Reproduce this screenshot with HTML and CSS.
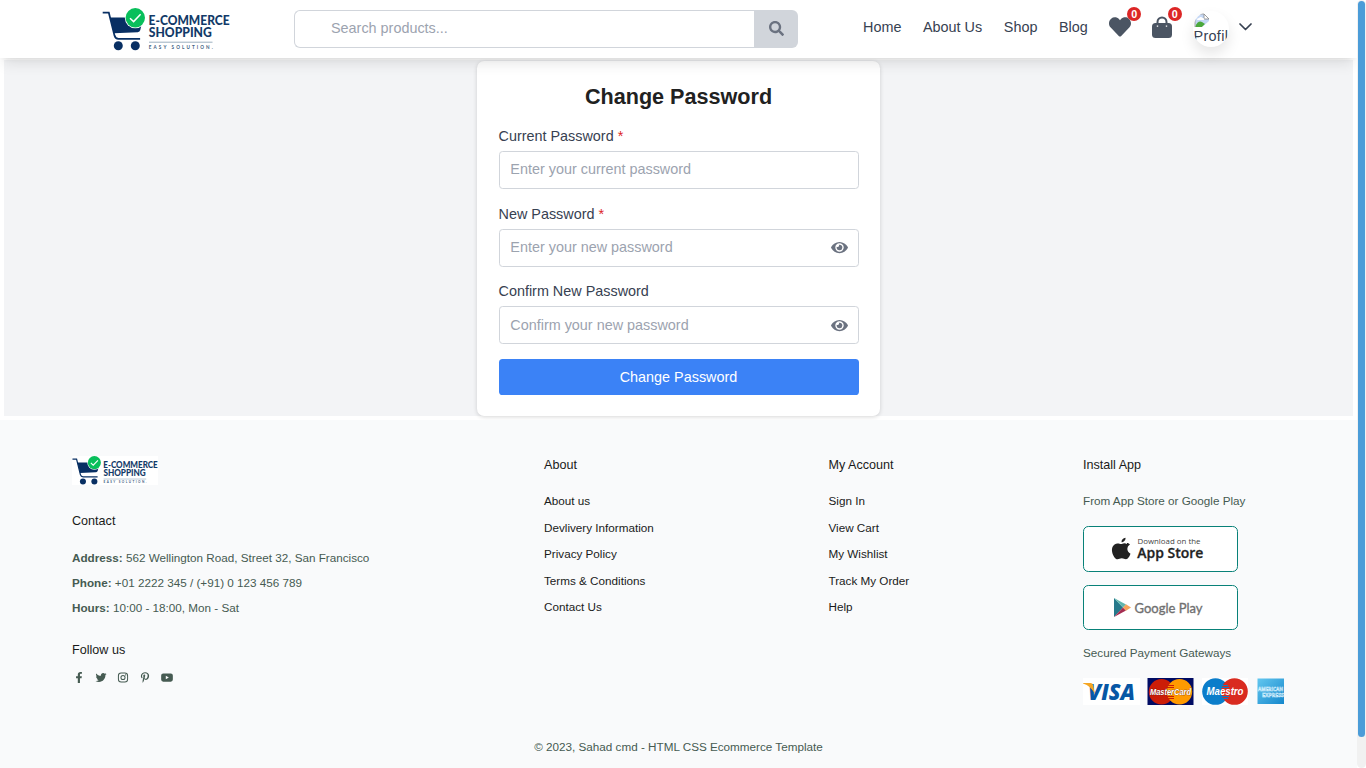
FILE: index.html
```
<!DOCTYPE html>
<html lang="en">
<head>
<meta charset="utf-8">
<title>Change Password</title>
<link rel="stylesheet" href="styles.css">
</head>
<body>
<svg width="0" height="0" class="defs" aria-hidden="true">
  <symbol id="logo" viewBox="0 0 128 43">
    <rect width="128" height="43" fill="#fff"/>
    <path d="M.7 4.600h6.100l5.700 23q.9 3.300 4 3.300h21.600" fill="none" stroke="#082f63" stroke-width="1.800"/>
    <path d="M8 9.500h33l-2.700 12.500q-.5 2-2.500 2.200L12 25.200z" fill="#082f63"/>
    <circle cx="16.300" cy="37.800" r="4.500" fill="#082f63"/><circle cx="33.300" cy="37.800" r="4.500" fill="#082f63"/>
    <circle cx="33.300" cy="9.800" r="10.500" fill="#fff"/><circle cx="33.300" cy="9.800" r="9.700" fill="#08bf5b"/>
    <path d="M28 10.300l3.600 3.300 7-7.300" fill="none" stroke="#fff" stroke-width="1.500"/>
    <g fill="#123a68" font-family="Lato, sans-serif" font-weight="900">
      <text x="46.600" y="17.200" font-size="12.600" textLength="81" lengthAdjust="spacingAndGlyphs">E-COMMERCE</text>
      <text x="46.800" y="29.300" font-size="12.600" textLength="63" lengthAdjust="spacingAndGlyphs">SHOPPING</text>
      <text x="46.800" y="40.500" font-size="4.600" font-weight="700" fill="#40607f" textLength="64">EASY SOLUTION.</text>
    </g>
    <path d="M47 34.200h63.500" stroke="#829bb0" stroke-width=".8"/>
  </symbol>
  <symbol id="eye" viewBox="0 0 576 512"><path fill="currentColor" d="M572.500 241.400C518.300 135.600 410.900 64 288 64S57.700 135.600 3.500 241.400a32.400 32.400 0 0 0 0 29.200C57.700 376.400 165.100 448 288 448s230.300-71.600 284.500-177.400a32.400 32.400 0 0 0 0-29.200zM288 400a144 144 0 1 1 144-144 143.900 143.900 0 0 1-144 144zm0-240a95.300 95.300 0 0 0-25.300 3.800 47.900 47.900 0 0 1-66.900 66.900A95.800 95.800 0 1 0 288 160z"/></symbol>
</svg>
<div class="window">
  <div class="page">
    <header class="header">
      <svg class="header-logo"><use href="#logo"/></svg>
      <div class="search">
        <input class="search-input" type="text" placeholder="Search products...">
        <button class="search-button"><svg width="15" height="15" viewBox="0 0 512 512"><path fill="currentColor" d="M505 442.700L405.300 343c-4.500-4.500-10.600-7-17-7H372c27.600-35.300 44-79.700 44-128C416 93.100 322.900 0 208 0S0 93.100 0 208s93.100 208 208 208c48.300 0 92.700-16.400 128-44v16.300c0 6.400 2.500 12.500 7 17l99.700 99.700c9.400 9.400 24.600 9.400 33.900 0l28.300-28.300c9.400-9.400 9.400-24.600.1-34zM208 336c-70.700 0-128-57.200-128-128 0-70.700 57.200-128 128-128 70.700 0 128 57.200 128 128 0 70.700-57.200 128-128 128z"/></svg></button>
      </div>
      <nav class="nav">
        <a>Home</a><a>About Us</a><a>Shop</a><a>Blog</a>
        <span class="nav-icon heart"><svg width="22" height="22" viewBox="0 0 512 512"><path fill="currentColor" d="M462.300 62.600C407.500 15.900 326 24.300 275.700 76.200L256 96.500l-19.700-20.300C186.100 24.300 104.500 15.900 49.700 62.600c-62.800 53.600-66.100 149.800-9.900 207.900l193.500 199.800c12.500 12.900 32.800 12.900 45.300 0l193.500-199.800c56.300-58.100 53-154.300-9.800-207.900z"/></svg><b class="badge">0</b></span>
        <span class="nav-icon bag"><svg width="20" height="22" viewBox="0 0 20 22"><path d="M5.500 10V6a4.500 4.500 0 0 1 9 0v4" fill="none" stroke="currentColor" stroke-width="2"/><rect y="7" width="20" height="15" rx="3.500" fill="currentColor"/><path d="M5.500 7v4M14.500 7v4" stroke="#fff" stroke-width="1.400" stroke-dasharray="0 2.500 1.300 5"/></svg><b class="badge">0</b></span>
        <span class="profile">
          <span class="avatar"><svg width="16" height="16" viewBox="0 0 16 16"><path d="M1 1h9l5 5v8H1z" fill="#c4d7f5"/><path d="M10 1v5h5z" fill="#fff" stroke="#858585" stroke-width=".8"/><path d="M3 7q0-2 2-2 2-2 3.500 0Q11 5 10 7z" fill="#fff"/><path d="M1 14q3-7 7-5l3 2-3 3z" fill="#4ba83c"/><path d="M1 14V1h9" fill="none" stroke="#a6a6a6"/><path d="M7 15l8-7v7z" fill="#fff"/></svg><span class="avatar-alt">Profile</span></span>
          <svg width="13" height="8" viewBox="0 0 13 8"><path d="M1 1l5.500 5.500L12 1" fill="none" stroke="#374151" stroke-width="1.700" stroke-linecap="round" stroke-linejoin="round"/></svg>
        </span>
      </nav>
    </header>
    <main class="main">
      <form class="card">
        <h1>Change Password</h1>
        <label class="label">Current Password <i>*</i></label>
        <div class="field"><input type="text" placeholder="Enter your current password"></div>
        <label class="label">New Password <i>*</i></label>
        <div class="field"><input type="text" placeholder="Enter your new password"><svg class="eye"><use href="#eye"/></svg></div>
        <label class="label">Confirm New Password</label>
        <div class="field"><input type="text" placeholder="Confirm your new password"><svg class="eye"><use href="#eye"/></svg></div>
        <button class="submit" type="button">Change Password</button>
      </form>
    </main>
    <footer class="footer">
      <div class="columns">
        <section>
          <svg class="footer-logo"><use href="#logo"/></svg>
          <h4>Contact</h4>
          <p><strong>Address:</strong> 562 Wellington Road, Street 32, San Francisco</p>
          <p><strong>Phone:</strong> +01 2222 345 / (+91) 0 123 456 789</p>
          <p><strong>Hours:</strong> 10:00 - 18:00, Mon - Sat</p>
          <h4 class="follow">Follow us</h4>
          <div class="social">
            <svg viewBox="0 0 320 512"><path d="M279.100 288l14.200-92.700h-88.900v-60.100c0-25.300 12.400-50.100 52.200-50.100H297V6.300S260.400 0 225.400 0c-73.200 0-121.100 44.400-121.100 124.700v70.600H22.900V288h81.400v224h100.200V288z"/></svg>
            <svg viewBox="0 0 512 512"><path d="M459.400 151.700c.3 4.500.3 9.100.3 13.600 0 138.700-105.600 298.600-298.600 298.600-59.500 0-114.700-17.200-161.100-47.100 8.400 1 16.600 1.300 25.300 1.300 49.100 0 94.200-16.600 130.300-44.800-46.100-1-84.800-31.200-98.100-72.800 6.500 1 13 1.600 19.800 1.600 9.400 0 18.800-1.300 27.600-3.600C56.800 288.700 20.800 246.500 20.800 195.600v-1.300c14 7.800 30.200 12.700 47.400 13.300C39.800 188.800 21.200 156.600 21.200 120.200c0-19.500 5.200-37.400 14.300-53C87.400 131.200 165.400 173 252.800 177.600c-1.600-7.800-2.600-15.900-2.600-24C250.200 95.800 297 48.700 355.200 48.700c30.200 0 57.500 12.700 76.700 33.100 23.700-4.500 46.500-13.300 66.600-25.300-7.800 24.400-24.400 44.800-46.100 57.800 21.100-2.300 41.600-8.100 60.400-16.200-14.300 20.800-32.200 39.300-52.600 54.300z"/></svg>
            <svg viewBox="0 0 24 24"><g fill="none" stroke="#465b52" stroke-width="2.200"><rect x="2" y="2" width="20" height="20" rx="6"/><circle cx="12" cy="12" r="4.500"/></g><circle cx="17.700" cy="6.300" r="1.400"/></svg>
            <svg viewBox="0 0 384 512"><path d="M204 6.500C101.400 6.500 0 74.900 0 185.600 0 256 39.600 296 63.600 296c9.900 0 15.600-27.600 15.600-35.400 0-9.300-23.700-29.100-23.700-67.800 0-80.400 61.200-137.400 140.400-137.400 68.100 0 118.500 38.700 118.500 109.800 0 53.100-21.300 152.700-90.300 152.700-24.900 0-46.200-18-46.200-43.800 0-37.800 26.400-74.400 26.400-113.400 0-66.200-93.900-54.200-93.900 25.800 0 16.800 2.100 35.400 9.600 50.700-13.800 59.400-42 147.900-42 209.100 0 18.900 2.700 37.500 4.500 56.400 3.400 3.800 1.700 3.400 6.900 1.500 50.400-69 48.600-82.500 71.400-172.800 12.300 23.400 44.100 36 69.300 36 106.200 0 153.900-103.500 153.900-196.800C384 71.300 298.200 6.500 204 6.500z"/></svg>
            <svg viewBox="0 0 576 512"><path fill-rule="evenodd" d="M110 64h356q94 0 94 94v196q0 94-94 94H110q-94 0-94-94V158q0-94 94-94zm122 111v162l143-81z"/></svg>
          </div>
        </section>
        <section class="links">
          <h4>About</h4>
          <a>About us</a><a>Devlivery Information</a><a>Privacy Policy</a><a>Terms &amp; Conditions</a><a>Contact Us</a>
        </section>
        <section class="links">
          <h4>My Account</h4>
          <a>Sign In</a><a>View Cart</a><a>My Wishlist</a><a>Track My Order</a><a>Help</a>
        </section>
        <section class="install">
          <h4>Install App</h4>
          <p>From App Store or Google Play</p>
          <div class="store apple"><svg width="153" height="44" viewBox="0 0 153 44">
            <path d="M44 17c-2-1.300-3.600-.8-5.200-.1-1.500.6-2.500-.6-4.500-.4-3.300.3-6 3.500-5.200 8.200.6 3.700 3.200 7.600 5.400 7.600 1.600 0 2.300-1 4.300-1 2 0 2.500 1 4.200 1 2 0 3.800-3.300 4.500-5.500-3.800-1.900-4.300-7-.5-9.200-.8-1-1.900-1.700-3-1.600zM38.500 15.300c-.2-2.300 1.600-4.300 4-4.500.3 2.400-1.700 4.400-4 4.500z" fill="#222" transform="translate(-1 0)"/>
            <g font-family="Open Sans, sans-serif"><text x="53.500" y="17" font-size="8" fill="#444" textLength="63" lengthAdjust="spacingAndGlyphs">Download on the</text><text x="53.300" y="31" font-size="14" font-weight="600" fill="#222" stroke="#222" stroke-width=".3" textLength="66" lengthAdjust="spacingAndGlyphs">App Store</text></g>
          </svg></div>
          <div class="store google"><svg width="153" height="43" viewBox="0 0 153 43">
            <path d="M30 12v19l9-9.400z" fill="#26798b"/><path d="M30 12l12 6.500-3 3.100z" fill="#60b5ad"/><path d="M30 31l12-6.500-3-3.100z" fill="#a42c50"/><path d="M42 18.300l5 3.200-5 3.300-3-3.300z" fill="#f5a45c"/>
            <text x="50.500" y="26.500" font-size="13.500" font-family="Lato, sans-serif" fill="#707070" stroke="#707070" stroke-width=".35" textLength="68" lengthAdjust="spacingAndGlyphs">Google Play</text>
          </svg></div>
          <p class="gateways">Secured Payment Gateways</p>
          <svg class="payments" width="202" height="29" viewBox="0 0 202 29">
            <rect width="57" height="27" y="1" fill="#fff"/>
            <text x="5" y="22.500" font-family="Open Sans, sans-serif" font-weight="800" font-style="italic" font-size="22.500" fill="#0757a5" textLength="47" lengthAdjust="spacingAndGlyphs">VISA</text>
            <path d="M0 6h7.500q2 0 2.500 2l2 9Q8 9 0 6.500z" fill="#f5a623"/>
            <rect x="64.500" y="1" width="46" height="27" fill="#000b63"/>
            <circle cx="78.500" cy="14.700" r="12.700" fill="#cb1d08"/><circle cx="96.500" cy="14.700" r="12.700" fill="#ff9a00"/>
            <path d="M84 8.500h7M84 10.500h7M84 19.500h7M84 21.500h7" stroke="#cb1d08"/>
            <text x="67" y="18.300" font-family="Liberation Sans, sans-serif" font-weight="700" font-style="italic" font-size="9.500" fill="#fff" stroke="#551a23" stroke-width=".5" paint-order="stroke" textLength="41" lengthAdjust="spacingAndGlyphs">MasterCard</text>
            <rect x="119" y="1" width="46" height="27" fill="#fff"/>
            <circle cx="132.500" cy="14.500" r="13.300" fill="#0b7dca"/><circle cx="151.500" cy="14.500" r="13.300" fill="#d92b20"/>
            <path d="M138 8.500h7M138 10.500h8M138 19.500h8M138 21.500h7" stroke="#0b7dca"/>
            <text x="123.500" y="18" font-family="Liberation Sans, sans-serif" font-weight="700" font-style="italic" font-size="10" fill="#fff" textLength="37" lengthAdjust="spacingAndGlyphs">Maestro</text>
            <defs><linearGradient id="amex" x2="1" y2="1"><stop stop-color="#63c7ef"/><stop offset="1" stop-color="#1587cc"/></linearGradient></defs>
            <rect x="174.500" y="1.500" width="26.500" height="25.500" fill="url(#amex)"/>
            <g font-family="Open Sans, sans-serif" font-weight="700" font-size="5.200" fill="none" stroke="#e0f5ff" stroke-width=".45"><text x="175" y="14" textLength="25" lengthAdjust="spacingAndGlyphs">AMERICAN</text><text x="179" y="19.500" textLength="22" lengthAdjust="spacingAndGlyphs">EXPRESS</text></g>
          </svg>
        </section>
      </div>
      <p class="copyright">© 2023, Sahad cmd - HTML CSS Ecommerce Template</p>
    </footer>
  </div>
  <div class="scroll-track"><div class="scroll-thumb"></div></div>
</div>
</body>
</html>
```
FILE: styles.css
```
* { box-sizing: border-box; margin: 0; }
body { font-family: "Liberation Sans", Arial, sans-serif; font-size: 14.4px; color: #212121; background: #fff; overflow: hidden; }
.defs { display: none; }
svg { display: block; flex: none; }
input, button { font: inherit; border: 0; padding: 0; outline: 0; }
.window { display: flex; height: 768px; }
.page { width: 1357px; display: flex; flex-direction: column; overflow: hidden; }
.header { position: relative; z-index: 2; flex: none; height: 58px; background: #fff; display: flex; box-shadow: 0 9px 13.5px -2.7px rgba(0,0,0,.1), 0 3.6px 5.4px -3.6px rgba(0,0,0,.1); }
.header-logo { width: 128px; height: 43px; margin: 8px 64px 0 102px; }
.search { display: flex; width: 504px; height: 38px; margin-top: 10px; }
.search-input { width: 460px; padding: 0 36px 2px; background: #fff; border: 1px solid #d1d5db; border-right: 0; border-radius: 6px 0 0 6px; }
input::placeholder { color: #9ca3af; opacity: 1; }
.search-button { flex: 1; display: flex; align-items: center; justify-content: center; padding-bottom: 2px; background: #d1d5db; color: #6b7280; border-radius: 0 6px 6px 0; }
.nav { display: flex; align-items: center; gap: 21.6px; height: 54px; margin-left: 65px; color: #374151; }
.nav-icon { position: relative; color: #4b5563; }
.heart { margin-right: -1px; padding-bottom: 1px; }
.bag { margin-right: -1px; }
.badge { position: absolute; top: -8px; right: -4px; width: 14.4px; height: 14.4px; border-radius: 50%; background: #dc2626; color: #fff; font-size: 10.8px; line-height: 14.4px; text-align: center; }
.heart .badge { top: -8.500px; right: -10px; }
.bag .badge { top: -9px; right: -10px; }
.profile { display: flex; align-items: center; gap: 10px; }
.avatar { display: block; width: 36px; height: 36px; margin-top: 4px; padding: 2px 0 0 1px; overflow: hidden; border-radius: 50%; box-shadow: 0 7px 14px rgba(0,0,0,.1); }
.avatar-alt { display: block; line-height: 14px; letter-spacing: .3px; }
.main { flex: none; height: 356px; margin: 2px 4px 4px; padding-top: 1px; background: #f3f4f6; display: flex; justify-content: center; }
.card { width: 403.2px; height: 355px; padding: 21.6px; background: #fff; border-radius: 7.2px; box-shadow: 0 1px 4px rgba(0,0,0,.16); }
.card h1 { font-size: 21.6px; line-height: 28.8px; margin-bottom: 14.4px; text-align: center; }
.label { display: block; line-height: 21px; color: #374151; margin-bottom: 4px; }
.label i { color: #dc2626; font-style: normal; }
.field { display: flex; align-items: center; height: 38px; margin-bottom: 14.8px; padding: 0 10px 0 10.8px; border: 1px solid #d1d5db; border-radius: 3.6px; color: #6b7280; background: #fff; }
.field input { flex: 1; min-width: 0; height: 34px; padding-bottom: 1.500px; background: none; }
.eye { width: 17px; height: 15px; }
.submit { display: block; width: 100%; height: 36px; padding-bottom: 1px; border-radius: 3.6px; background: #3b82f6; color: #fff; }
.footer { flex: 1; background: #f9fafb; padding: 36px 0 0 72px; font-size: 11.7px; color: #465b52; }
.columns { display: grid; grid-template-columns: 472px 284.500px 254.500px 1fr; height: 280.5px; }
.footer h4 { font-size: 12.6px; line-height: 18px; font-weight: 400; color: #1a1a1a; margin-bottom: 18px; }
.footer p { line-height: 19px; margin-bottom: 6px; }
.footer-logo { width: 86px; height: 29px; margin-bottom: 27px; }
.footer .follow { margin: 24px 0 13px; }
.social { display: flex; gap: 8px; fill: #465b52; }
.social svg { width: 14px; height: 11px; }
.links { display: flex; flex-direction: column; }
.links h4, .install h4 { margin-bottom: 17.4px; }
.links a { color: #1a1a1a; line-height: 19px; margin-bottom: 7.5px; }
.store { width: 155px; background: #fff; border: 1px solid #088178; border-radius: 5.4px; margin-bottom: 13px; }
.apple { height: 46px; margin-top: 15.6px; }
.google { height: 45px; }
.footer .gateways { margin-bottom: 15px; }
.copyright { width: 1213px; text-align: center; }
.scroll-track { width: 9px; background: #f1f1f1; padding: 1px 1px 0; border-radius: 5px; }
.scroll-thumb { height: 736px; background: #4b9cd8; border-radius: 4px; }
```
